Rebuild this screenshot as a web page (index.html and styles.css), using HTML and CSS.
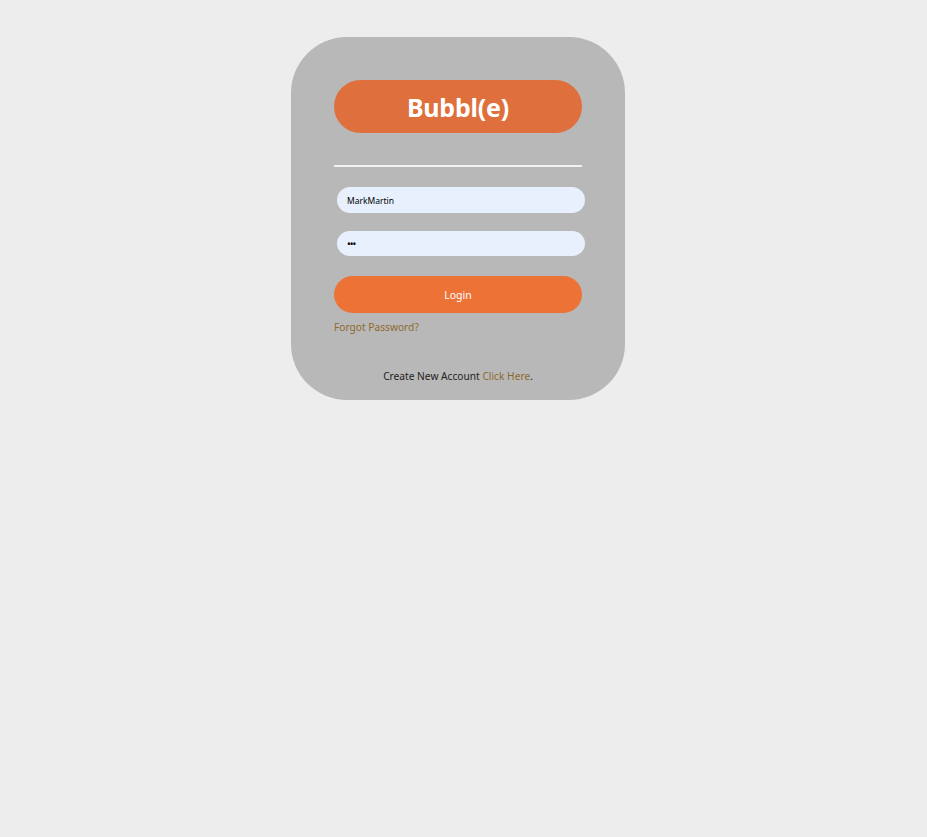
FILE: index.html
```html
<!DOCTYPE html>
<html>
<head>
<meta charset="utf-8">
<link rel="stylesheet" href="styles.css">
</head>
<body>
<div class="page">
  <div class="card">
    <div class="title">Bubbl(e)</div>
    <hr class="rule">
    <form class="form">
      <input class="field" type="text" value="MarkMartin">
      <input class="field pw" type="password" value="abc">
      <button class="login" type="button">Login</button>
    </form>
    <a class="forgot" href="#">Forgot Password?</a>
    <p class="create">Create New Account <a class="link" href="#">Click Here</a>.</p>
  </div>
</div>
</body>
</html>
```
FILE: styles.css
```css
html, body {
  margin: 0;
  padding: 0;
  background: #ededed;
  font-family: "Noto Sans", "Open Sans", sans-serif;
}
.page {
  display: flex;
  justify-content: center;
  padding-top: 37px;
  padding-right: 11px;
}
.card {
  width: 334px;
  height: 363px;
  box-sizing: border-box;
  background: #b8b8b8;
  border-radius: 56px;
  padding: 43px 43px 0 43px;
  display: flex;
  flex-direction: column;
}
.title {
  height: 53px;
  border-radius: 27px;
  background: #df6f3c;
  color: #fff;
  font-weight: 700;
  font-size: 25px;
  display: flex;
  align-items: center;
  justify-content: center;
  letter-spacing: -0.2px;
}
.rule {
  margin: 32px 0 0 0;
  border: 0;
  height: 2px;
  background: #f2f2f2;
}
.form {
  display: flex;
  flex-direction: column;
  margin-top: 20px;
}
.field {
  box-sizing: border-box;
  margin-left: 3px;
  width: 248px;
  height: 26px;
  border: 0;
  border-radius: 13px;
  background: #e8f0fe;
  padding: 0 10px;
  font-family: "Noto Sans", sans-serif;
  font-size: 8.5px;
  color: #000;
  outline: none;
}
.pw {
  margin-top: 18px;
  height: 25px;
  font-size: 10px;
  letter-spacing: -1px;
}
.login {
  margin-top: 20px;
  width: 248px;
  height: 37px;
  border: 0;
  border-radius: 19px;
  background: #ed7235;
  color: #fff;
  font-family: "Noto Sans", sans-serif;
  font-size: 10.5px;
}
.forgot {
  margin-top: 7px;
  font-size: 10.2px;
  color: #8e6a2e;
  text-decoration: none;
  align-self: flex-start;
}
.create {
  margin: 35px 0 0 0;
  text-align: center;
  font-size: 10.2px;
  color: #222;
}
.link {
  color: #8e6a2e;
  text-decoration: none;
}
```
